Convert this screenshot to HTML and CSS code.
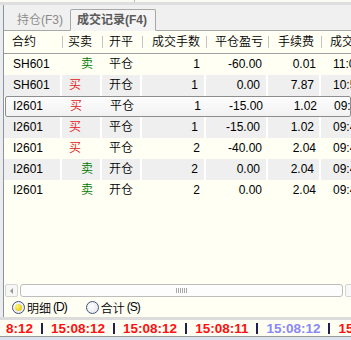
FILE: index.html
```html
<!DOCTYPE html>
<html lang="zh-CN">
  <head>
    <meta charset="UTF-8" />
    <title>成交记录</title>
    <link rel="stylesheet" href="styles.css">
  </head>
  <body>
    <div class="window">
      <div class="top-strip"><span class="top-mark"></span></div>

      <div class="main">
        <div class="gutter"></div>
        <div class="panel">
          <!-- Tabs -->
          <div class="tabs">
            <div class="tab">持仓(F3)</div>
            <div class="tab tab-active">成交记录(F4)</div>
          </div>

          <!-- Trade table -->
          <div class="grid">
            <div class="grid-head">
              <div class="hcell h-code">合约</div>
              <div class="hcell h-side">买卖</div>
              <div class="hcell h-open">开平</div>
              <div class="hcell h-qty">成交手数</div>
              <div class="hcell h-pnl">平仓盈亏</div>
              <div class="hcell h-fee">手续费</div>
              <div class="hcell h-time">成交</div>
            </div>

            <div class="grid-row">
              <div class="cell c-code">SH601</div>
              <div class="cell c-side sell">卖</div>
              <div class="cell c-open">平仓</div>
              <div class="cell c-num">1</div>
              <div class="cell c-num">-60.00</div>
              <div class="cell c-num c-fee">0.01</div>
              <div class="cell c-time">11:02:45</div>
            </div>
            <div class="grid-row alt">
              <div class="cell c-code">SH601</div>
              <div class="cell c-side buy">买</div>
              <div class="cell c-open">开仓</div>
              <div class="cell c-num">1</div>
              <div class="cell c-num">0.00</div>
              <div class="cell c-num c-fee">7.87</div>
              <div class="cell c-time">10:58:12</div>
            </div>
            <div class="grid-row selected">
              <div class="cell c-code">I2601</div>
              <div class="cell c-side buy">买</div>
              <div class="cell c-open">平仓</div>
              <div class="cell c-num">1</div>
              <div class="cell c-num">-15.00</div>
              <div class="cell c-num c-fee">1.02</div>
              <div class="cell c-time">09:41:30</div>
            </div>
            <div class="grid-row alt">
              <div class="cell c-code">I2601</div>
              <div class="cell c-side buy">买</div>
              <div class="cell c-open">平仓</div>
              <div class="cell c-num">1</div>
              <div class="cell c-num">-15.00</div>
              <div class="cell c-num c-fee">1.02</div>
              <div class="cell c-time">09:41:30</div>
            </div>
            <div class="grid-row">
              <div class="cell c-code">I2601</div>
              <div class="cell c-side buy">买</div>
              <div class="cell c-open">平仓</div>
              <div class="cell c-num">2</div>
              <div class="cell c-num">-40.00</div>
              <div class="cell c-num c-fee">2.04</div>
              <div class="cell c-time">09:41:02</div>
            </div>
            <div class="grid-row alt">
              <div class="cell c-code">I2601</div>
              <div class="cell c-side sell">卖</div>
              <div class="cell c-open">开仓</div>
              <div class="cell c-num">2</div>
              <div class="cell c-num">0.00</div>
              <div class="cell c-num c-fee">2.04</div>
              <div class="cell c-time">09:40:15</div>
            </div>
            <div class="grid-row">
              <div class="cell c-code">I2601</div>
              <div class="cell c-side sell">卖</div>
              <div class="cell c-open">开仓</div>
              <div class="cell c-num">2</div>
              <div class="cell c-num">0.00</div>
              <div class="cell c-num c-fee">2.04</div>
              <div class="cell c-time">09:40:15</div>
            </div>
          </div>

          <!-- Horizontal scrollbar -->
          <div class="hscroll">
            <div class="scroll-btn"><span class="arrow-left"></span></div>
            <div class="scroll-thumb"><span class="grip"></span></div>
            <div class="scroll-btn"></div>
          </div>

          <!-- Detail / total switch -->
          <div class="radio-row">
            <label class="radio-item">
              <span class="radio radio-on"></span>明细<span class="accel">(D)</span>
            </label>
            <label class="radio-item">
              <span class="radio"></span>合计<span class="accel">(S)</span>
            </label>
          </div>
        </div>
      </div>

      <!-- Clock status bar -->
      <div class="status">
        <span class="clock">8:12</span><span class="sep"></span>
        <span class="clock">15:08:12</span><span class="sep"></span>
        <span class="clock">15:08:12</span><span class="sep"></span>
        <span class="clock">15:08:11</span><span class="sep"></span>
        <span class="clock clock-local">15:08:12</span><span class="sep"></span>
        <span class="clock">15:08:12</span>
      </div>
    </div>
  </body>
</html>
```

FILE: styles.css
```css
/* Page */
body {
  margin: 0;
  font-family: "Liberation Sans", "Noto Sans CJK SC", sans-serif;
  font-size: 12px;
  font-weight: 350; /* thinner CJK face, Latin stays regular */
  color: #000;
  background: #fffff4;
}

.window {
  width: 351px;
  height: 340px;
  overflow: hidden;
  display: flex;
  flex-direction: column;
}

/* Thin strip above the tabs */
.top-strip {
  height: 2px;
  border-bottom: 3px solid #dedede;
  background: #fbfbf3;
  padding-left: 134px;
}

.top-mark {
  display: block;
  width: 1px;
  height: 2px;
  background: #b8b8b8;
}

.main {
  display: flex;
  height: 312px;
}

.gutter {
  width: 3px;
  background: #ececec;
  border-right: 1px solid #8796a6;
}

.panel {
  flex: 1;
  display: flex;
  flex-direction: column;
  min-width: 0;
}

/* Tabs */
.tabs {
  height: 25px;
  display: flex;
  align-items: flex-end;
  padding-left: 3px;
  background: #f0f0f0;
  border-bottom: 1px solid #a8a8a8;
}

.tab {
  height: 20px;
  line-height: 20px;
  padding: 0 7px 0 10px;
  color: #8a8a8a;
  white-space: nowrap;
}

.tab-active {
  height: 20px;
  margin-bottom: -1px;
  padding: 0 8px 0 6px;
  color: #5a5a5a;
  font-weight: bold;
  background: #f4f4f4;
  border: 1px solid #a8a8a8;
  border-bottom: 1px solid #f4f4f4;
  border-radius: 2px 2px 0 0;
}

/* Table */
.grid {
  flex: 1;
  background: #fffff4;
}

.grid-head,
.grid-row {
  display: grid;
  grid-template-columns: 58px 40px 40px 64px 62px 53px 60px;
  white-space: nowrap;
}

.grid-head {
  height: 22px;
  line-height: 22px;
  border-bottom: 1px solid #a0a0a0;
}

.hcell {
  position: relative;
  color: #000;
}

/* short divider marks between header cells */
.hcell::after {
  content: "";
  position: absolute;
  right: -1px;
  top: 5px;
  width: 1px;
  height: 12px;
  background: #c4c4c4;
}

.h-code { padding-left: 8px; }
.h-side { padding-left: 6px; }
.h-open { padding-left: 7px; }
.h-qty  { padding-left: 10px; }
.h-pnl  { padding-left: 9px; }
.h-fee  { padding-left: 10px; }
.h-time { padding-left: 9px; }

.grid-row {
  height: 21px;
  line-height: 21px;
}

.grid-row.alt {
  background: #efefef;
}

.grid-row.alt .cell {
  border-right: 2px solid #fff;
}

.grid-row.alt .cell:last-child {
  border-right: none;
}

.grid-row.selected {
  height: 19px;
  line-height: 19px;
  margin-left: 1px;
  grid-template-columns: 57px 40px 40px 64px 62px 53px 60px;
  border: 1px solid #8e8e8e;
  border-radius: 2px;
  background: linear-gradient(#fdfdfd, #f2f2f2);
}

.selected .c-code { padding-left: 7px; }

.cell {
  overflow: hidden;
}

.c-code { padding-left: 9px; }

.c-side { padding-left: 7px; }
.c-side.sell { padding-left: 19px; color: #007a00; }
.c-side.buy { color: #e02020; }

.c-open { padding-left: 7px; }

.c-num {
  text-align: right;
  padding-right: 6px;
}

.c-fee { padding-right: 5px; }

.c-time { padding-left: 12px; }

/* Horizontal scrollbar */
.hscroll {
  height: 13px;
  display: flex;
  gap: 2px;
  padding-left: 1px;
  background: #fffff4;
}

.scroll-btn {
  width: 11px;
  height: 11px;
  flex: none;
  border: 1px solid #d4d4d4;
  border-radius: 2px;
  background: #f7f7f7;
  display: flex;
  align-items: center;
  justify-content: center;
}

.arrow-left {
  width: 0;
  height: 0;
  border-top: 3px solid transparent;
  border-bottom: 3px solid transparent;
  border-right: 3px solid #9a9a9a;
}

.scroll-thumb {
  width: 321px;
  height: 11px;
  flex: none;
  border: 1px solid #bdbdbd;
  border-radius: 3px;
  background: #fdfdfd;
  display: flex;
  align-items: center;
  justify-content: center;
}

.grip {
  width: 11px;
  height: 5px;
  background: repeating-linear-gradient(90deg, #a8a8a8 0 1px, transparent 1px 2px);
}

/* Radio switch */
.radio-row {
  height: 20px;
  display: flex;
  align-items: center;
  gap: 19px;
  padding-left: 8px;
  background: #fffff4;
}

.radio-item {
  display: flex;
  align-items: center;
  white-space: nowrap;
}

.radio {
  width: 11px;
  height: 11px;
  margin-right: 2px;
  border: 1px solid #3f5277;
  border-radius: 50%;
  background: radial-gradient(circle at 40% 40%, #ffffff, #dfe3ea);
  display: flex;
  align-items: center;
  justify-content: center;
}

.radio-on::after {
  content: "";
  width: 7px;
  height: 7px;
  border-radius: 50%;
  background: radial-gradient(circle at 35% 35%, #fff86a, #e4b400);
}

.accel {
  margin-left: 2px;
  letter-spacing: -1px;
  font-size: 12px;
}

/* Clock bar */
.status {
  height: 16px;
  display: flex;
  align-items: center;
  padding-left: 6px;
  border-top: 3px solid #dcdcdc;
  border-bottom: 1px solid #9a9a9a;
  background: #fffff4;
  white-space: nowrap;
  box-shadow: 0 3px 0 #dbe4ee;
}

.clock {
  font-size: 13.5px;
  font-weight: bold;
  color: #ff1010;
}

.clock-local {
  color: #8888f8;
}

.sep {
  width: 2px;
  height: 11px;
  margin: 0 8px;
  flex: none;
  background: #202050;
}
```
